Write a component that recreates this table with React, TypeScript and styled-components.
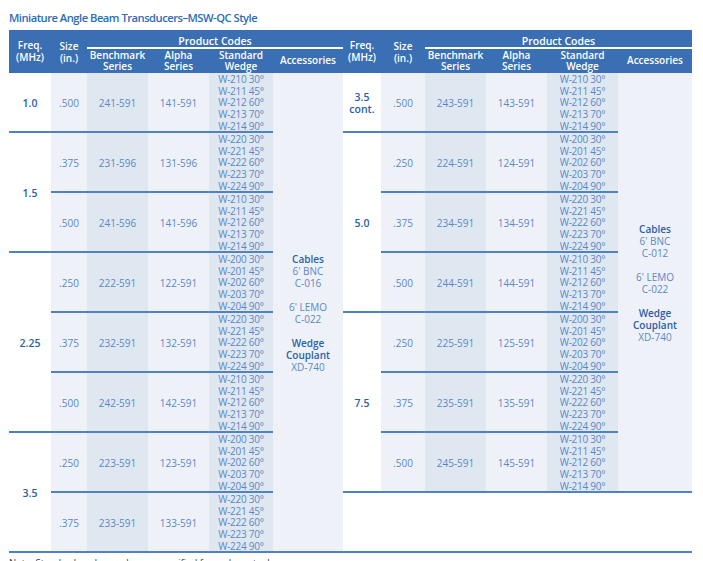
import React from "react";
import styled, { createGlobalStyle } from "styled-components";

const GlobalStyle = createGlobalStyle`
  html, body { margin: 0; padding: 0; background: #ffffff; }
  body { font-family: "Open Sans", "Noto Sans", sans-serif; }
`;

const BLUE = "#3b6fb3";
const LINE = "#4f82c5";
const LIGHT = "#eef2f8";
const DARK = "#dfe7f1";
const TEXT = "#5b87c6";
const STRONG = "#2b60a8";

const Page = styled.div`
  padding: 9px 0 0 9px;
  width: 684px;
`;

const Title = styled.h1`
  margin: 0 0 5px 0;
  height: 16px;
  font-size: 11.2px;
  font-weight: 600;
  color: #2c6cb5;
  letter-spacing: -0.5px;
  line-height: 17px;
  white-space: nowrap;
`;

const Tables = styled.div`
  display: flex;
`;

const Table = styled.div<{ $w: number }>`
  width: ${(p) => p.$w}px;
  display: flex;
  flex-direction: column;
`;

const HeaderRow = styled.div`
  display: flex;
  height: 43px;
  background: ${BLUE};
  color: #ffffff;
  font-size: 10px;
  font-weight: 600;
  line-height: 12px;
  text-align: center;
`;

const HeadCell = styled.div<{ $w: number; $pt?: number }>`
  width: ${(p) => p.$w}px;
  flex: none;
  padding-top: ${(p) => p.$pt ?? 9}px;
  box-sizing: border-box;
`;

const CodesBlock = styled.div`
  flex: 1;
  display: flex;
  flex-direction: column;
`;

const CodesTitle = styled.div`
  height: 19px;
  border-bottom: 2px solid #ffffff;
  box-sizing: border-box;
  padding-top: 5px;
  font-size: 10.5px;
`;

const SubHeads = styled.div`
  display: flex;
  flex: 1;
`;

const SubHead = styled.div<{ $w: number; $pt?: number }>`
  width: ${(p) => p.$w}px;
  flex: none;
  padding-top: ${(p) => p.$pt ?? 1}px;
  line-height: 10.8px;
  box-sizing: border-box;
`;

const Body = styled.div`
  display: flex;
`;

const Groups = styled.div`
  display: flex;
  flex-direction: column;
`;

const Group = styled.div`
  display: flex;
`;

const FreqCell = styled.div<{ $w: number }>`
  width: ${(p) => p.$w}px;
  flex: none;
  display: flex;
  align-items: center;
  justify-content: center;
  text-align: center;
  border-bottom: 2px solid ${LINE};
  box-sizing: border-box;
  font-size: 10.5px;
  font-weight: 600;
  line-height: 12px;
  color: ${STRONG};
  background: #ffffff;
  padding-top: 2px;
`;

const SubRows = styled.div`
  display: flex;
  flex-direction: column;
`;

const SubRow = styled.div`
  display: flex;
  height: 60px;
  box-sizing: border-box;
  border-bottom: 2px solid ${LINE};
`;

const Cell = styled.div<{ $w: number; $dark?: boolean }>`
  width: ${(p) => p.$w}px;
  flex: none;
  display: flex;
  align-items: center;
  justify-content: center;
  background: ${(p) => (p.$dark ? DARK : LIGHT)};
  color: ${TEXT};
  font-size: 10px;
  padding-top: 2px;
  box-sizing: border-box;
`;

const WedgeCell = styled.div<{ $w: number }>`
  width: ${(p) => p.$w}px;
  flex: none;
  display: flex;
  justify-content: center;
  background: ${DARK};
  color: ${TEXT};
  font-size: 10px;
  letter-spacing: -0.25px;
`;

const WedgeList = styled.div`
  display: flex;
  flex-direction: column;
  line-height: 11.7px;
  padding-top: 1px;
  white-space: nowrap;
`;

const AccCell = styled.div<{ $w: number }>`
  width: ${(p) => p.$w}px;
  flex: none;
  display: flex;
  flex-direction: column;
  align-items: center;
  justify-content: center;
  background: ${LIGHT};
  border-bottom: 2px solid ${LINE};
  box-sizing: border-box;
  font-size: 10px;
  line-height: 12px;
  color: ${TEXT};
  text-align: center;
  padding-top: 2px;
`;

const AccStrong = styled.div`
  font-weight: 600;
  color: ${STRONG};
`;

const AccGap = styled.div`
  height: 12px;
`;

const BlankRow = styled.div`
  height: 60px;
  border-bottom: 2px solid ${LINE};
  box-sizing: border-box;
`;

const Note = styled.div`
  margin-top: 3px;
  font-size: 9.5px;
  color: #3a3a3a;
  white-space: nowrap;
`;

type Row = { size: string; bench: string; alpha: string; wedge: string[] };
type G = { freq: string[]; rows: Row[] };

const W20 = ["W-200 30°", "W-201 45°", "W-202 60°", "W-203 70°", "W-204 90°"];
const W21 = ["W-210 30°", "W-211 45°", "W-212 60°", "W-213 70°", "W-214 90°"];
const W22 = ["W-220 30°", "W-221 45°", "W-222 60°", "W-223 70°", "W-224 90°"];

const leftGroups: G[] = [
  { freq: ["1.0"], rows: [{ size: ".500", bench: "241-591", alpha: "141-591", wedge: W21 }] },
  {
    freq: ["1.5"],
    rows: [
      { size: ".375", bench: "231-596", alpha: "131-596", wedge: W22 },
      { size: ".500", bench: "241-596", alpha: "141-596", wedge: W21 },
    ],
  },
  {
    freq: ["2.25"],
    rows: [
      { size: ".250", bench: "222-591", alpha: "122-591", wedge: W20 },
      { size: ".375", bench: "232-591", alpha: "132-591", wedge: W22 },
      { size: ".500", bench: "242-591", alpha: "142-591", wedge: W21 },
    ],
  },
  {
    freq: ["3.5"],
    rows: [
      { size: ".250", bench: "223-591", alpha: "123-591", wedge: W20 },
      { size: ".375", bench: "233-591", alpha: "133-591", wedge: W22 },
    ],
  },
];

const rightGroups: G[] = [
  { freq: ["3.5", "cont."], rows: [{ size: ".500", bench: "243-591", alpha: "143-591", wedge: W21 }] },
  {
    freq: ["5.0"],
    rows: [
      { size: ".250", bench: "224-591", alpha: "124-591", wedge: W20 },
      { size: ".375", bench: "234-591", alpha: "134-591", wedge: W22 },
      { size: ".500", bench: "244-591", alpha: "144-591", wedge: W21 },
    ],
  },
  {
    freq: ["7.5"],
    rows: [
      { size: ".250", bench: "225-591", alpha: "125-591", wedge: W20 },
      { size: ".375", bench: "235-591", alpha: "135-591", wedge: W22 },
      { size: ".500", bench: "245-591", alpha: "145-591", wedge: W21 },
    ],
  },
];

type Cols = { freq: number; size: number; bench: number; alpha: number; wedge: number; acc: number };

const leftCols: Cols = { freq: 42, size: 36, bench: 61, alpha: 61, wedge: 64, acc: 70 };
const rightCols: Cols = { freq: 38, size: 44, bench: 61, alpha: 61, wedge: 71, acc: 74 };

const sum = (c: Cols) => c.freq + c.size + c.bench + c.alpha + c.wedge + c.acc;

function Header({ c }: { c: Cols }) {
  return (
    <HeaderRow>
      <HeadCell $w={c.freq} $pt={9}>
        Freq.
        <br />
        (MHz)
      </HeadCell>
      <HeadCell $w={c.size} $pt={10}>
        Size
        <br />
        (in.)
      </HeadCell>
      <CodesBlock>
        <CodesTitle>Product Codes</CodesTitle>
        <SubHeads>
          <SubHead $w={c.bench}>
            Benchmark
            <br />
            Series
          </SubHead>
          <SubHead $w={c.alpha}>
            Alpha
            <br />
            Series
          </SubHead>
          <SubHead $w={c.wedge}>
            Standard
            <br />
            Wedge
          </SubHead>
          <SubHead $w={c.acc} $pt={6}>
            Accessories
          </SubHead>
        </SubHeads>
      </CodesBlock>
    </HeaderRow>
  );
}

function Accessories({ c, bnc }: { c: Cols; bnc: string }) {
  return (
    <AccCell $w={c.acc}>
      <AccStrong>Cables</AccStrong>
      <div>6' BNC</div>
      <div>{bnc}</div>
      <AccGap />
      <div>6' LEMO</div>
      <div>C-022</div>
      <AccGap />
      <AccStrong>Wedge</AccStrong>
      <AccStrong>Couplant</AccStrong>
      <div>XD-740</div>
    </AccCell>
  );
}

function DataTable({ c, groups, bnc, blank }: { c: Cols; groups: G[]; bnc: string; blank?: boolean }) {
  return (
    <Table $w={sum(c)}>
      <Header c={c} />
      <Body>
        <Groups>
          {groups.map((g, gi) => (
            <Group key={gi}>
              <FreqCell $w={c.freq}>
                <div>
                  {g.freq.map((f) => (
                    <div key={f}>{f}</div>
                  ))}
                </div>
              </FreqCell>
              <SubRows>
                {g.rows.map((r, ri) => (
                  <SubRow key={ri}>
                    <Cell $w={c.size}>{r.size}</Cell>
                    <Cell $w={c.bench} $dark>
                      {r.bench}
                    </Cell>
                    <Cell $w={c.alpha}>{r.alpha}</Cell>
                    <WedgeCell $w={c.wedge}>
                      <WedgeList>
                        {r.wedge.map((w) => (
                          <span key={w}>{w}</span>
                        ))}
                      </WedgeList>
                    </WedgeCell>
                  </SubRow>
                ))}
              </SubRows>
            </Group>
          ))}
        </Groups>
        <Accessories c={c} bnc={bnc} />
      </Body>
      {blank && <BlankRow />}
    </Table>
  );
}

export default function App() {
  return (
    <>
      <GlobalStyle />
      <Page>
        <Title>Miniature Angle Beam Transducers–MSW-QC Style</Title>
        <Tables>
          <DataTable c={leftCols} groups={leftGroups} bnc="C-016" />
          <DataTable c={rightCols} groups={rightGroups} bnc="C-012" blank />
        </Tables>
        <Note>Note: Standard wedge angles are specified for carbon steel.</Note>
      </Page>
    </>
  );
}
